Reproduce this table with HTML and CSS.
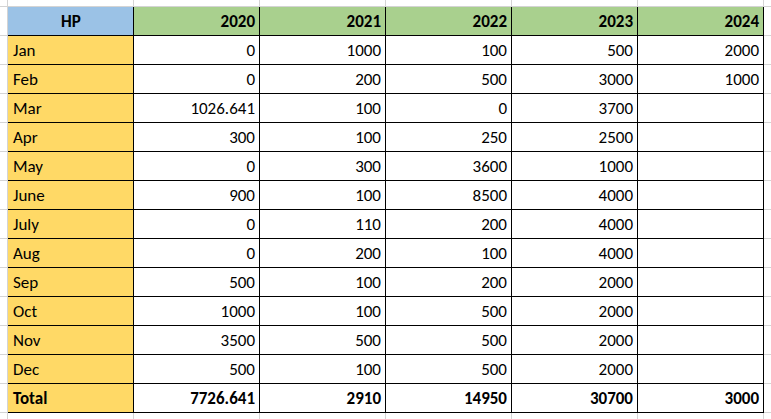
FILE: index.html
```html
<!DOCTYPE html>
<html>
<head>
<meta charset="utf-8">
<link rel="stylesheet" href="styles.css">
</head>
<body>
<div class="sheet">
<table class="grid">
<thead>
<tr><th class="hp">HP</th><th class="yr">2020</th><th class="yr">2021</th><th class="yr">2022</th><th class="yr">2023</th><th class="yr">2024</th></tr>
</thead>
<tbody>
<tr><td class="m">Jan</td><td>0</td><td>1000</td><td>100</td><td>500</td><td>2000</td></tr>
<tr><td class="m">Feb</td><td>0</td><td>200</td><td>500</td><td>3000</td><td>1000</td></tr>
<tr><td class="m">Mar</td><td>1026.641</td><td>100</td><td>0</td><td>3700</td><td></td></tr>
<tr><td class="m">Apr</td><td>300</td><td>100</td><td>250</td><td>2500</td><td></td></tr>
<tr><td class="m">May</td><td>0</td><td>300</td><td>3600</td><td>1000</td><td></td></tr>
<tr><td class="m">June</td><td>900</td><td>100</td><td>8500</td><td>4000</td><td></td></tr>
<tr><td class="m">July</td><td>0</td><td>110</td><td>200</td><td>4000</td><td></td></tr>
<tr><td class="m">Aug</td><td>0</td><td>200</td><td>100</td><td>4000</td><td></td></tr>
<tr><td class="m">Sep</td><td>500</td><td>100</td><td>200</td><td>2000</td><td></td></tr>
<tr><td class="m">Oct</td><td>1000</td><td>100</td><td>500</td><td>2000</td><td></td></tr>
<tr><td class="m">Nov</td><td>3500</td><td>500</td><td>500</td><td>2000</td><td></td></tr>
<tr><td class="m">Dec</td><td>500</td><td>100</td><td>500</td><td>2000</td><td></td></tr>
<tr class="total"><td class="m">Total</td><td>7726.641</td><td>2910</td><td>14950</td><td>30700</td><td>3000</td></tr>
</tbody>
</table>
</div>
</body>
</html>
```
FILE: styles.css
```css
html, body {
  margin: 0;
  padding: 0;
}
body {
  width: 771px;
  height: 419px;
  overflow: hidden;
  background-color: #ffffff;
  background-image:
    repeating-linear-gradient(to right, #d4d4d4 0 1px, transparent 1px 126px),
    repeating-linear-gradient(to bottom, #d4d4d4 0 1px, transparent 1px 29px);
  background-position: 7px 0, 0 6px;
  font-family: Carlito, Calibri, Lato, "Open Sans", sans-serif;
  font-size: 17px;
  color: #000;
}
.sheet {
  padding: 6px 0 0 7px;
}
.grid {
  border-collapse: separate;
  border-spacing: 0;
  border-top: 1px solid #d4d4d4;
  border-left: 1px solid #d4d4d4;
  background: #fff;
}
.grid th, .grid td {
  box-sizing: border-box;
  width: 126px;
  height: 29px;
  padding: 0 4px 4px 5px;
  border-right: 1px solid #000;
  border-bottom: 1px solid #000;
  text-align: right;
  vertical-align: bottom;
  white-space: nowrap;
  line-height: 19px;
}
.grid th {
  font-weight: bold;
  background: #a9d08e;
}
.grid th.hp {
  background: #9bc2e6;
  text-align: center;
}
.grid td.m {
  background: #ffd966;
  text-align: left;
}
.grid tr.total td {
  font-weight: bold;
}
```
